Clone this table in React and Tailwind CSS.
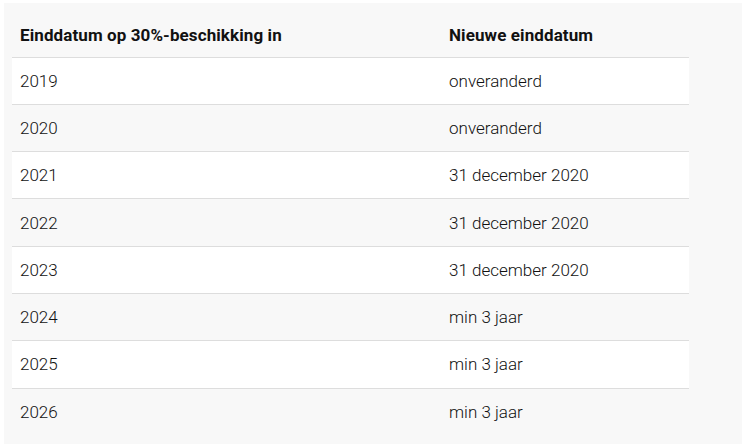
import React from 'react';

const rows = [
  ['2019', 'onveranderd'],
  ['2020', 'onveranderd'],
  ['2021', '31 december 2020'],
  ['2022', '31 december 2020'],
  ['2023', '31 december 2020'],
  ['2024', 'min 3 jaar'],
  ['2025', 'min 3 jaar'],
  ['2026', 'min 3 jaar'],
];

const App = () => {
  return (
    <div className="w-[746px] h-[444px] bg-white pt-[3px] pl-[4px] overflow-hidden" style={{ fontFamily: 'Roboto, "Liberation Sans", sans-serif' }}>
      <div className="w-[738px] h-[460px] bg-[#f8f8f8] pt-[7px] pl-[8px]">
        <table className="w-[677px] border-collapse text-[17px] leading-[24px]">
          <thead>
            <tr className="border-b border-[#dddddd]">
              <th className="w-[429px] h-[47px] pl-2 pt-[3px] text-left font-bold tracking-[0.1px] text-[#111]">Einddatum op 30%-beschikking in</th>
              <th className="pl-2 pt-[3px] text-left font-bold tracking-[0.1px] text-[#111]">Nieuwe einddatum</th>
            </tr>
          </thead>
          <tbody>
            {rows.map(([year, date], i) => (
              <tr key={year} className={`border-b border-[#dddddd] ${i % 2 === 0 ? 'bg-white' : ''} ${i === rows.length - 1 ? 'border-b-0' : ''}`}>
                <td className="h-[47.3px] pl-2 font-light text-[#111]">{year}</td>
                <td className="pl-2 font-light text-[#111]">{date}</td>
              </tr>
            ))}
          </tbody>
        </table>
      </div>
    </div>
  );
};

export default App;
